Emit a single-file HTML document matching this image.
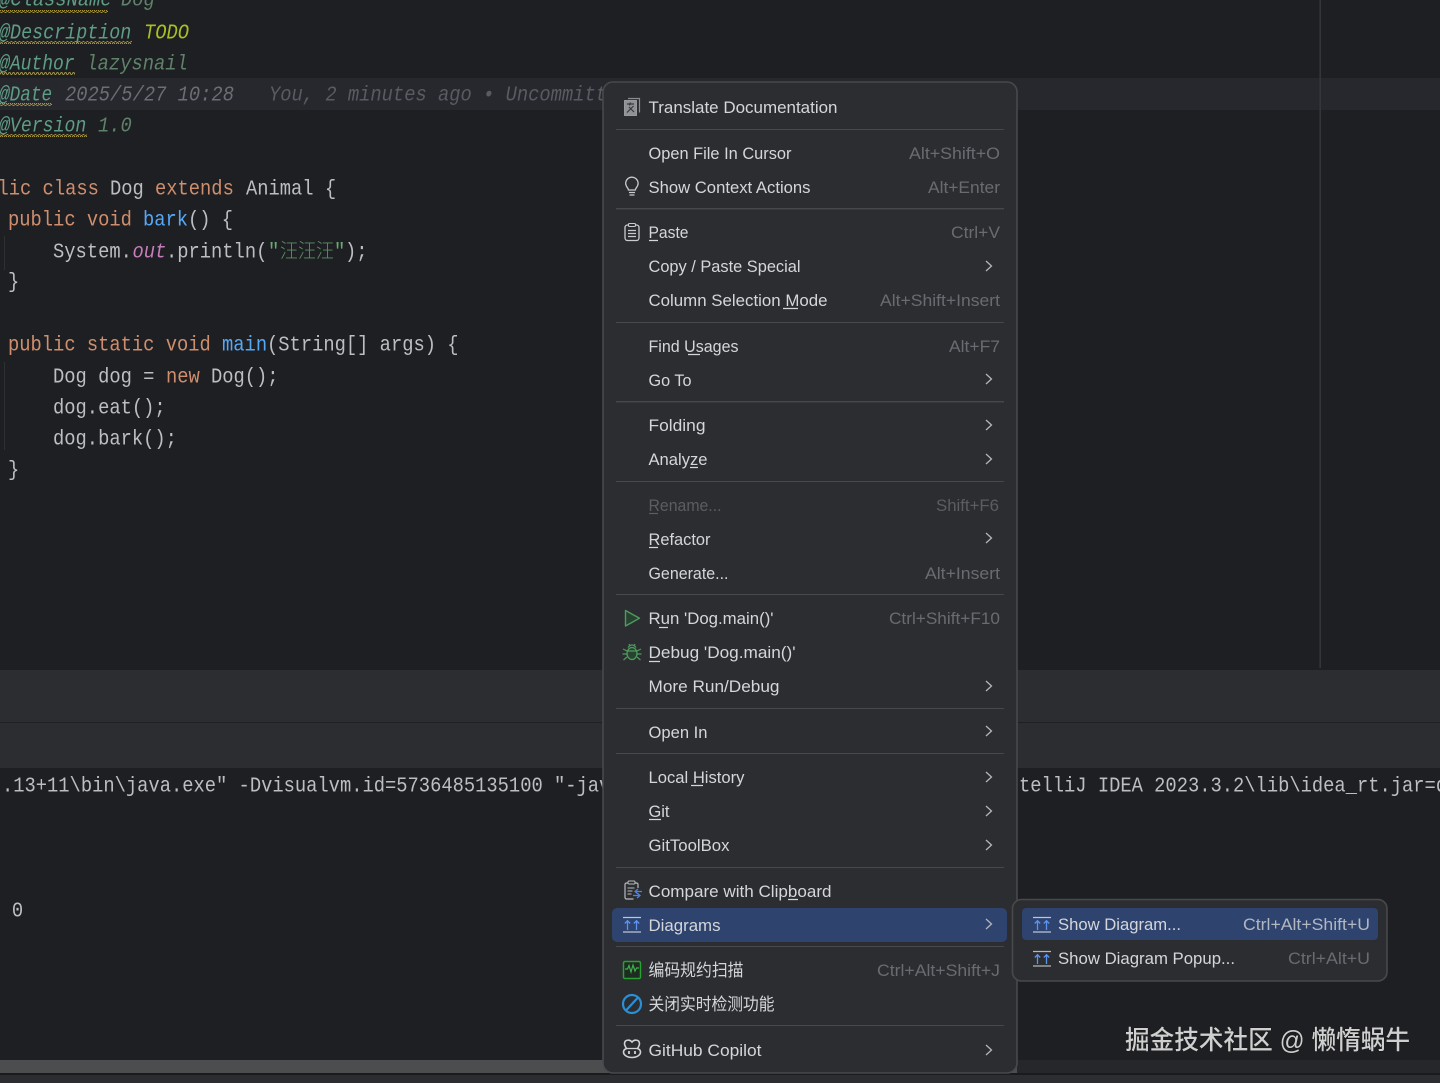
<!DOCTYPE html>
<html><head><meta charset="utf-8"><title>IDE context menu</title>
<style>
html,body{margin:0;padding:0;background:#1e1f22;width:1440px;height:1083px;overflow:hidden}
svg{display:block}
.c{font-family:"Liberation Mono","DejaVu Sans Mono","Noto Sans CJK SC",monospace;font-size:20.87px;fill:#bcbec4}
.i{font-style:italic}
.t{fill:#5f9d85}.v{fill:#5f826b}.g{fill:#6b6e75}.b{fill:#585b61}
.k{fill:#cf8e6d}.m{fill:#56a8f5}.o{fill:#c77dbb}.s{fill:#6aab73}
.u{font-family:"Liberation Sans","Noto Sans CJK SC",sans-serif;font-size:17px;fill:#d4d6da}
.z{font-family:"Liberation Sans",sans-serif;font-size:16.5px;fill:#686b71}
.d{fill:#5a5d62}
.w{font-family:"Liberation Sans","Noto Sans CJK SC",sans-serif;font-size:26px;fill:#cfcfcf;font-weight:500}
.ln{stroke:#d4d6da;stroke-width:1.2}
.sep{fill:#46484c}
.ch{fill:none;stroke:#b4b6ba;stroke-width:1.3}
</style></head><body>
<svg xmlns="http://www.w3.org/2000/svg" width="1440" height="1083" viewBox="0 0 1440 1083">
<defs>
<pattern id="sq" width="4" height="3" patternUnits="userSpaceOnUse"><path d="M0 2.4L1 .6 2 .6 3 2.4 4 2.4" fill="none" stroke="#b5a13a" stroke-width=".9"/></pattern>
</defs>
<rect width="1440" height="1083" fill="#1e1f22"/>
<rect y="78" width="1440" height="32" fill="#26282e"/>
<rect x="1319.5" width="1.4" height="668" fill="#36383b"/>
<rect x="4" y="236" width="1" height="34" fill="#2e3033"/>
<rect x="4" y="362" width="1" height="88" fill="#2e3033"/>

<g class="c" transform="translate(0 .7) scale(.9 1)">
<text class="i" y="5"><tspan class="t" x="-1.1">@ClassName</tspan><tspan class="v" x="134.4">Dog</tspan></text>
<text class="i" y="38"><tspan class="t" x="-1.1" textLength="147" lengthAdjust="spacingAndGlyphs">@Description</tspan><tspan x="160" fill="#a8c023">TODO</tspan></text>
<text class="i" y="69"><tspan class="t" x="-1.1" textLength="84" lengthAdjust="spacingAndGlyphs">@Author</tspan><tspan class="v" x="96">lazysnail</tspan></text>
<text class="i" y="100"><tspan class="t" x="-1.1" textLength="59" lengthAdjust="spacingAndGlyphs">@Date</tspan><tspan class="g" x="72.2">2025/5/27 10:28</tspan><tspan class="b" x="298.9">You, 2 minutes ago • Uncommitted</tspan></text>
<text class="i" y="131"><tspan class="t" x="-1.1" textLength="97" lengthAdjust="spacingAndGlyphs">@Version</tspan><tspan class="v" x="108.9">1.0</tspan></text>
<text y="194"><tspan class="k" x="-2.8">lic class</tspan><tspan x="122.2">Dog</tspan><tspan class="k" x="172.2">extends</tspan><tspan x="273.3">Animal {</tspan></text>
<text y="225"><tspan class="k" x="8.9">public void</tspan><tspan class="m" x="158.9">bark</tspan><tspan x="208.9">() {</tspan></text>
<text y="257"><tspan x="58.9">System.</tspan><tspan class="o i" x="147.2">out</tspan><tspan x="184.4">.println(</tspan><tspan class="s" x="297.8">"</tspan><tspan class="s" x="311.1" style="font-size:20px;font-weight:300;opacity:.8">汪汪汪</tspan><tspan class="s" x="371.1">"</tspan><tspan x="383.3">);</tspan></text>
<text x="8.9" y="287">}</text>
<text y="350"><tspan class="k" x="8.9">public static void</tspan><tspan class="m" x="246.7">main</tspan><tspan x="296.7">(String[] args) {</tspan></text>
<text y="382"><tspan x="58.9">Dog dog =</tspan><tspan class="k" x="184.4">new</tspan><tspan x="234.4">Dog();</tspan></text>
<text x="58.9" y="413">dog.eat();</text>
<text x="58.9" y="444">dog.bark();</text>
<text x="8.9" y="475">}</text>
<text x="2.2" y="791">.13+11\bin\java.exe" -Dvisualvm.id=5736485135100 "-javaagent</text>
<text x="1132.2" y="791">telliJ IDEA 2023.3.2\lib\idea_rt.jar=d</text>
<text x="13.2" y="916">0</text>
</g>
<rect x="0" y="10" width="108" height="3" fill="url(#sq)"/>
<rect x="0" y="41" width="132" height="3" fill="url(#sq)"/>
<rect x="0" y="72" width="75" height="3" fill="url(#sq)"/>
<rect x="0" y="103" width="52" height="3" fill="url(#sq)"/>
<rect x="0" y="134" width="87" height="3" fill="url(#sq)"/>

<rect y="670" width="1440" height="52" fill="#2b2d30"/>
<rect y="722" width="1440" height="1" fill="#1f2023"/>
<rect y="723" width="1440" height="45" fill="#2b2d30"/>
<rect y="1060" width="1440" height="13" fill="#4b4d4f"/>
<rect x="1017" y="1060" width="423" height="13" fill="#25272a"/>
<rect y="1073" width="1440" height="2" fill="#1a1b1d"/>
<rect y="1075" width="1440" height="8" fill="#2b2d30"/>

<text class="w" x="1125" y="1049" textLength="285" lengthAdjust="spacingAndGlyphs" style="paint-order:stroke" stroke="#111" stroke-width=".6">掘金技术社区 @ 懒惰蜗牛</text>

<!-- main menu -->
<rect x="603" y="82" width="414" height="991" rx="10" fill="#2b2d30" stroke="#47494d" stroke-width="1.6"/>
<rect class="sep" x="616" y="129" width="388" height="1"/>
<rect class="sep" x="616" y="208" width="388" height="1.4"/>
<rect class="sep" x="616" y="322" width="388" height="1"/>
<rect class="sep" x="616" y="401" width="388" height="1.4"/>
<rect class="sep" x="616" y="481" width="388" height="1"/>
<rect class="sep" x="616" y="594" width="388" height="1"/>
<rect class="sep" x="616" y="708" width="388" height="1"/>
<rect class="sep" x="616" y="753" width="388" height="1"/>
<rect class="sep" x="616" y="867" width="388" height="1"/>
<rect class="sep" x="616" y="946" width="388" height="1"/>
<rect class="sep" x="616" y="1025" width="388" height="1"/>
<rect x="612" y="908" width="395" height="34" rx="5" fill="#2e436e"/>

<g class="u">
<text x="648.5" y="113" textLength="189" lengthAdjust="spacingAndGlyphs">Translate Documentation</text>
<text x="648.5" y="159" textLength="143" lengthAdjust="spacingAndGlyphs">Open File In Cursor</text>
<text x="648.5" y="193" textLength="162" lengthAdjust="spacingAndGlyphs">Show Context Actions</text>
<text x="648.5" y="238" textLength="40" lengthAdjust="spacingAndGlyphs">Paste</text>
<text x="648.5" y="272" textLength="152" lengthAdjust="spacingAndGlyphs">Copy / Paste Special</text>
<text x="648.5" y="306" textLength="179" lengthAdjust="spacingAndGlyphs">Column Selection Mode</text>
<text x="648.5" y="352" textLength="90" lengthAdjust="spacingAndGlyphs">Find Usages</text>
<text x="648.5" y="386" textLength="43" lengthAdjust="spacingAndGlyphs">Go To</text>
<text x="648.5" y="431" textLength="57" lengthAdjust="spacingAndGlyphs">Folding</text>
<text x="648.5" y="465" textLength="59" lengthAdjust="spacingAndGlyphs">Analyze</text>
<text x="648.5" y="511" textLength="73" lengthAdjust="spacingAndGlyphs" style="fill:#5a5d62">Rename...</text>
<text x="648.5" y="545" textLength="62" lengthAdjust="spacingAndGlyphs">Refactor</text>
<text x="648.5" y="579" textLength="80" lengthAdjust="spacingAndGlyphs">Generate...</text>
<text x="648.5" y="624" textLength="125" lengthAdjust="spacingAndGlyphs">Run 'Dog.main()'</text>
<text x="648.5" y="658" textLength="147" lengthAdjust="spacingAndGlyphs">Debug 'Dog.main()'</text>
<text x="648.5" y="692" textLength="131" lengthAdjust="spacingAndGlyphs">More Run/Debug</text>
<text x="648.5" y="738" textLength="59" lengthAdjust="spacingAndGlyphs">Open In</text>
<text x="648.5" y="783" textLength="96" lengthAdjust="spacingAndGlyphs">Local History</text>
<text x="648.5" y="817" textLength="21" lengthAdjust="spacingAndGlyphs">Git</text>
<text x="648.5" y="851" textLength="81" lengthAdjust="spacingAndGlyphs">GitToolBox</text>
<text x="648.5" y="897" textLength="183" lengthAdjust="spacingAndGlyphs">Compare with Clipboard</text>
<text x="648.5" y="931" textLength="72" lengthAdjust="spacingAndGlyphs">Diagrams</text>
<text x="648.5" y="976" textLength="95" lengthAdjust="spacingAndGlyphs">编码规约扫描</text>
<text x="648.5" y="1010" textLength="126" lengthAdjust="spacingAndGlyphs">关闭实时检测功能</text>
<text x="648.5" y="1056" textLength="113" lengthAdjust="spacingAndGlyphs">GitHub Copilot</text>
</g>

<g class="ln">
<path d="M649 240.5h9M783 308.5h15M688 354.5h12M690 467.5h8M659 627.5h9M649 661.5h11M691 785.5h12M649 819.5h12M788 899.5h10M649 547.5h9"/>
<path d="M649 513.5h9" stroke="#5a5d62"/>
</g>

<g class="z">
<text x="909" y="159" textLength="91" lengthAdjust="spacingAndGlyphs">Alt+Shift+O</text>
<text x="928" y="193" textLength="72" lengthAdjust="spacingAndGlyphs">Alt+Enter</text>
<text x="951" y="238" textLength="49" lengthAdjust="spacingAndGlyphs">Ctrl+V</text>
<text x="880" y="306" textLength="120" lengthAdjust="spacingAndGlyphs">Alt+Shift+Insert</text>
<text x="949" y="352" textLength="51" lengthAdjust="spacingAndGlyphs">Alt+F7</text>
<text x="936" y="511" textLength="63" lengthAdjust="spacingAndGlyphs" class="d">Shift+F6</text>
<text x="925" y="579" textLength="75" lengthAdjust="spacingAndGlyphs">Alt+Insert</text>
<text x="889" y="624" textLength="111" lengthAdjust="spacingAndGlyphs">Ctrl+Shift+F10</text>
<text x="877" y="976" textLength="123" lengthAdjust="spacingAndGlyphs">Ctrl+Alt+Shift+J</text>
</g>

<g class="ch">
<path d="M986 261l5.5 5-5.5 5M986 374l5.5 5-5.5 5M986 420l5.5 5-5.5 5M986 454l5.5 5-5.5 5M986 533l5.5 5-5.5 5M986 681l5.5 5-5.5 5M986 726l5.5 5-5.5 5M986 772l5.5 5-5.5 5M986 806l5.5 5-5.5 5M986 840l5.5 5-5.5 5M986 919l5.5 5-5.5 5M986 1045l5.5 5-5.5 5"/>
</g>

<!-- icons -->
<g fill="none">
<path d="M628 98.500h11.500v14" stroke="#8a8c90" stroke-width="1.200"/>
<rect x="624.500" y="100.500" width="12" height="15" fill="#8f9194" stroke="#a8aaad" stroke-width=".8"/>
<path d="M627 104h7M630.500 102.500l-1 3M627 112.500l6.500-6.500M629 107l5 5" stroke="#37393c" stroke-width="1.200"/>
<path d="M628.500 190c0-2-2.800-3-2.800-6.600a6.200 6.200 0 0 1 12.400 0c0 3.600-2.800 4.600-2.800 6.600z" stroke="#c9cbcf" stroke-width="1.300"/>
<path d="M629 192.500h6M629.500 195h5" stroke="#c9cbcf" stroke-width="1.200"/>
<rect x="625" y="225" width="14" height="15.500" rx="2.500" stroke="#c9cbcf" stroke-width="1.300"/>
<rect x="628.500" y="223.500" width="7" height="3" rx="1" fill="#2b2d30" stroke="#c9cbcf" stroke-width="1.100"/>
<path d="M628 230.500h8M628 233.500h8M628 236.500h8" stroke="#c9cbcf" stroke-width="1.200"/>
<path d="M625.500 610.500v15.500l14-7.800z" fill="#27432f" stroke="#4f9a60" stroke-width="1.400" stroke-linejoin="round"/>
<ellipse cx="632" cy="653.500" rx="5" ry="6" fill="#27432f" stroke="#4f9a60" stroke-width="1.300"/>
<path d="M628 647.500q4-5 8 0M627 651h10M623 649l4 2M641 649l-4 2M622.500 654h4.500M641.500 654h-4.500M623.500 660l3.500-3M640.500 660l-3.500-3M629 644l1 2M635 644l-1 2" stroke="#4f9a60" stroke-width="1.200"/>
<path d="M638 888v-3.500a1.500 1.500 0 0 0-1.500-1.500h-10a1.500 1.500 0 0 0-1.500 1.500v13a1.500 1.500 0 0 0 1.500 1.500h7" stroke="#b9bbbf" stroke-width="1.200"/>
<rect x="628" y="881" width="7" height="3" rx="1" fill="#2b2d30" stroke="#b9bbbf"/>
<path d="M627.500 888h7M627.500 891h5M627.500 894h4" stroke="#b9bbbf" stroke-width="1.100"/>
<path d="M642 891.500h-7M638 889l-3 2.500 3 2.500M633 895.500h7M637 893l3 2.500-3 2.500" stroke="#4d82e0" stroke-width="1.300"/>
<path d="M623 917.500h18M623 932h18" stroke="#bfc5d6" stroke-width="1.300"/>
<path d="M627.500 930v-9M624.800 923.500l2.700-2.800 2.700 2.800M636.500 930v-9M633.800 923.500l2.700-2.800 2.700 2.800" stroke="#5c93ee" stroke-width="1.300"/>
<rect x="623.500" y="961.500" width="17" height="17" rx="1.500" fill="#1f2a22" stroke="#25a22f" stroke-width="1.500"/>
<path d="M625 969l2.500 0 1.500-3.500 2 6.500 2-7 2 6 1.500-3 2.500 0" stroke="#3fb04a" stroke-width="1.200"/>
<circle cx="632" cy="1004" r="9" stroke="#2b8fd6" stroke-width="2.200"/>
<path d="M626 1010.500l12-13" stroke="#2b8fd6" stroke-width="2.200"/>
<path d="M626.500 1048.500c-2-3-3-5.500-1-7.500 2-1.500 5-1 6.500 1 1.500-2 4.500-2.500 6.500-1 2 2 1 4.500-1 7.500 2.500 1 3 2 3 3.500 0 3-3.500 5.500-8.500 5.500s-8.500-2.500-8.500-5.500c0-1.500.5-2.500 3-3.500z" stroke="#d0d2d6" stroke-width="1.600"/>
<path d="M625.500 1048.500h13" stroke="#d0d2d6" stroke-width="1.300"/>
<path d="M629 1051v3M635 1051v3" stroke="#d0d2d6" stroke-width="1.800"/>
</g>

<!-- submenu -->
<rect x="1012.500" y="899.500" width="374.500" height="81.500" rx="9" fill="#2b2d30" stroke="#47494d" stroke-width="1.600"/>
<rect x="1022" y="908" width="356" height="32" rx="4" fill="#2e436e"/>
<g fill="none" stroke-width="1.300">
<path d="M1033 917.500h18M1033 932h18" stroke="#bfc5d6"/>
<path d="M1037.500 930v-9M1034.800 923.500l2.700-2.800 2.700 2.800M1046.500 930v-9M1043.800 923.500l2.700-2.800 2.700 2.800" stroke="#5c93ee"/>
<path d="M1033 951.500h18M1033 966h18" stroke="#b4b6ba"/>
<path d="M1037.500 964v-9M1034.800 957.500l2.700-2.800 2.700 2.800M1046.500 964v-9M1043.800 957.500l2.700-2.800 2.700 2.800" stroke="#5c93ee"/>
</g>
<g class="u">
<text x="1058" y="930" textLength="123" lengthAdjust="spacingAndGlyphs">Show Diagram...</text>
<text x="1058" y="964" textLength="177" lengthAdjust="spacingAndGlyphs">Show Diagram Popup...</text>
</g>
<text class="z" x="1243" y="930" textLength="127" lengthAdjust="spacingAndGlyphs" style="fill:#b2b6c0">Ctrl+Alt+Shift+U</text>
<text class="z" x="1288" y="964" textLength="82" lengthAdjust="spacingAndGlyphs">Ctrl+Alt+U</text>
</svg>
</body></html>
